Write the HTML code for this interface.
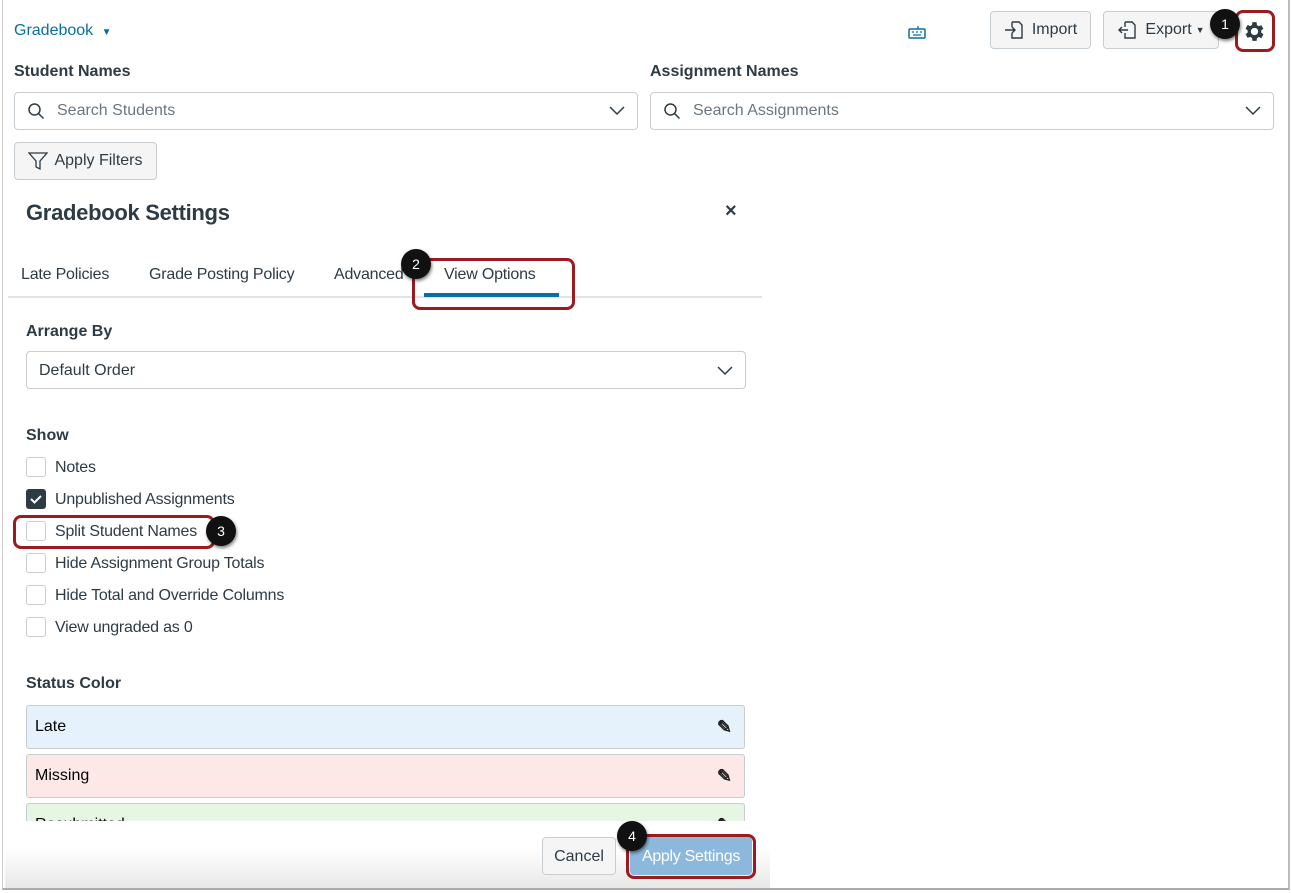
<!DOCTYPE html><html><head><style>
*{box-sizing:border-box;margin:0;padding:0}
body{width:1291px;height:893px;overflow:hidden;background:#fff;font-family:"Liberation Sans",sans-serif;color:#2d3b45;position:relative}
.a{position:absolute}
.frame{left:2px;top:0;width:1288px;height:890px;border-left:1px solid #ccc;border-right:2px solid #bbb;border-bottom:2px solid #aaa}
.btn{background:#f5f5f5;border:1px solid #c7cdd1;border-radius:4px;font-size:16px;color:#2d3b45;display:flex;align-items:center;justify-content:center;gap:8px}
.inp{border:1px solid #c7cdd1;border-radius:4px;height:38px;font-size:16px;color:#6b7780;display:flex;align-items:center}
.lbl{font-size:16px;font-weight:bold;transform:translateY(1px)}
.cb{width:20px;height:20px;border:1px solid #c7cdd1;border-radius:3px;background:#fff}
.ct{font-size:16px;letter-spacing:-0.2px;transform:translateY(1px)}
.red{border:3px solid #9b1b1f;border-radius:8px}
.badge{width:30px;height:30px;border-radius:50%;background:#111;color:#fff;font-size:14px;display:flex;align-items:center;justify-content:center;box-shadow:1px 2px 3px rgba(0,0,0,.5)}
.row{left:26px;width:719px;height:44px;border:1px solid #c7cdd1;border-radius:3px;font-size:16px;padding-left:8px;display:flex;align-items:center;color:#000}
.pen{position:absolute;right:12px;top:11px;font-size:18px;color:#222;font-weight:bold}
</style></head><body>
<div class="a frame"></div>
<div class="a" style="left:14px;top:22px;font-size:16px;color:#0770a3">Gradebook <span style="font-size:10px;margin-left:4px">▼</span></div>
<svg class="a" style="left:908px;top:25px" width="18" height="14" viewBox="0 0 18 14"><rect x="1" y="4" width="16" height="9" rx="1" fill="none" stroke="#0770a3" stroke-width="1.5"/><path d="M4 7h2M8 7h2M12 7h2M5 10h8M10 4V1" stroke="#0770a3" stroke-width="1.3"/></svg>
<div class="a btn" style="left:990px;top:11px;width:101px;height:38px"><svg width="20" height="20" viewBox="0 0 20 20" fill="none" stroke="#2d3b45" stroke-width="1.4"><path d="M8 2h7l3 3v13H8v-5M8 7V2M1 10h10M8 7l3 3-3 3"/></svg>Import</div>
<div class="a btn" style="left:1103px;top:11px;width:116px;height:38px"><svg width="20" height="20" viewBox="0 0 20 20" fill="none" stroke="#2d3b45" stroke-width="1.4"><path d="M8 2h7l3 3v13H8v-5M8 7V2M2 10h9M5 7l-3 3 3 3"/></svg>Export <span style="font-size:9px;margin-left:-4px">▼</span></div>
<div class="a red" style="left:1235px;top:10px;width:40px;height:42px"></div>
<svg class="a" style="left:1242px;top:19px" width="25" height="25" viewBox="0 0 24 24"><path fill="#2d3b45" d="M19.4 13a7.5 7.5 0 000-2l2.1-1.6-2-3.5-2.5 1a7.5 7.5 0 00-1.7-1L15 3h-4l-.4 2.7a7.5 7.5 0 00-1.7 1l-2.5-1-2 3.5L6.5 11a7.5 7.5 0 000 2l-2.1 1.6 2 3.5 2.5-1a7.5 7.5 0 001.7 1L11 21h4l.4-2.7a7.5 7.5 0 001.7-1l2.5 1 2-3.5zM13 15.5a3.5 3.5 0 110-7 3.5 3.5 0 010 7z" transform="translate(-1 0)"/></svg>
<div class="a badge" style="left:1210px;top:9px">1</div>
<div class="a lbl" style="left:14px;top:62px">Student Names</div>
<div class="a lbl" style="left:650px;top:62px">Assignment Names</div>
<div class="a inp" style="left:14px;top:92px;width:624px"><svg style="margin:0 12px" width="18" height="18" viewBox="0 0 18 18" fill="none" stroke="#2d3b45" stroke-width="1.5"><circle cx="7.5" cy="7.5" r="5.5"/><path d="M11.5 11.5l5 5"/></svg>Search Students<svg style="position:absolute;right:12px" width="16" height="10" viewBox="0 0 16 10" fill="none" stroke="#2d3b45" stroke-width="1.5"><path d="M1 1l7 7 7-7"/></svg></div>
<div class="a inp" style="left:650px;top:92px;width:624px"><svg style="margin:0 12px" width="18" height="18" viewBox="0 0 18 18" fill="none" stroke="#2d3b45" stroke-width="1.5"><circle cx="7.5" cy="7.5" r="5.5"/><path d="M11.5 11.5l5 5"/></svg>Search Assignments<svg style="position:absolute;right:12px" width="16" height="10" viewBox="0 0 16 10" fill="none" stroke="#2d3b45" stroke-width="1.5"><path d="M1 1l7 7 7-7"/></svg></div>
<div class="a btn" style="left:14px;top:142px;width:143px;height:38px;gap:6px"><svg width="20" height="20" viewBox="0 0 20 20" fill="none" stroke="#2d3b45" stroke-width="1.3"><path d="M1 2h18l-7 8v8l-4-2v-6z"/></svg>Apply Filters</div>
<div class="a" style="left:26px;top:200px;font-size:22px;font-weight:bold;letter-spacing:-0.3px">Gradebook Settings</div>
<div class="a" style="left:725px;top:200px;font-size:20px;font-weight:bold">×</div>
<div class="a ct" style="left:21px;top:265px">Late Policies</div>
<div class="a ct" style="left:149px;top:265px">Grade Posting Policy</div>
<div class="a ct" style="left:334px;top:265px">Advanced</div>
<div class="a ct" style="left:444px;top:265px">View Options</div>
<div class="a" style="left:8px;top:296px;width:754px;height:2px;background:#e0e4e7"></div>
<div class="a" style="left:424px;top:293px;width:135px;height:4px;background:#0770a3"></div>
<div class="a red" style="left:412px;top:258px;width:163px;height:52px"></div>
<div class="a badge" style="left:401px;top:249px">2</div>
<div class="a lbl" style="left:26px;top:322px">Arrange By</div>
<div class="a inp" style="left:26px;top:351px;width:720px;color:#2d3b45;padding-left:12px;padding-top:2px">Default Order<svg style="position:absolute;right:12px" width="16" height="10" viewBox="0 0 16 10" fill="none" stroke="#2d3b45" stroke-width="1.5"><path d="M1 1l7 7 7-7"/></svg></div>
<div class="a lbl" style="left:26px;top:426px">Show</div>
<div class="a cb" style="left:26px;top:457px"></div><div class="a ct" style="left:55px;top:458px">Notes</div>
<div class="a cb" style="left:26px;top:489px;background:#2d3b45;border-color:#2d3b45"><svg width="18" height="18" viewBox="0 0 18 18"><path d="M4 9l3.5 3.5L14 6" fill="none" stroke="#fff" stroke-width="2"/></svg></div><div class="a ct" style="left:55px;top:490px">Unpublished Assignments</div>
<div class="a cb" style="left:26px;top:521px"></div><div class="a ct" style="left:55px;top:522px">Split Student Names</div>
<div class="a cb" style="left:26px;top:553px"></div><div class="a ct" style="left:55px;top:554px">Hide Assignment Group Totals</div>
<div class="a cb" style="left:26px;top:585px"></div><div class="a ct" style="left:55px;top:586px">Hide Total and Override Columns</div>
<div class="a cb" style="left:26px;top:617px"></div><div class="a ct" style="left:55px;top:618px">View ungraded as 0</div>
<div class="a red" style="left:13px;top:515px;width:202px;height:34px"></div>
<div class="a badge" style="left:206px;top:516px">3</div>
<div class="a lbl" style="left:26px;top:674px">Status Color</div>
<div class="a row" style="top:705px;background:#e5f2fb">Late<span class="pen">✎</span></div>
<div class="a row" style="top:754px;background:#fde8e8">Missing<span class="pen">✎</span></div>
<div class="a row" style="top:803px;background:#e5f6e5">Resubmitted<span class="pen">✎</span></div>
<div class="a" style="left:5px;top:821px;width:765px;height:67px;background:linear-gradient(#fff 40%,#e8e8e8)"></div>
<div class="a btn" style="left:542px;top:837px;width:74px;height:38px;padding-top:2px">Cancel</div>
<div class="a" style="left:630px;top:837px;width:122px;height:38px;background:#8cb8dd;border-radius:4px;color:#fff;font-size:16px;letter-spacing:-0.3px;padding-top:2px;display:flex;align-items:center;justify-content:center">Apply Settings</div>
<div class="a red" style="left:626px;top:834px;width:130px;height:45px"></div>
<div class="a badge" style="left:617px;top:821px">4</div>
</body></html>
